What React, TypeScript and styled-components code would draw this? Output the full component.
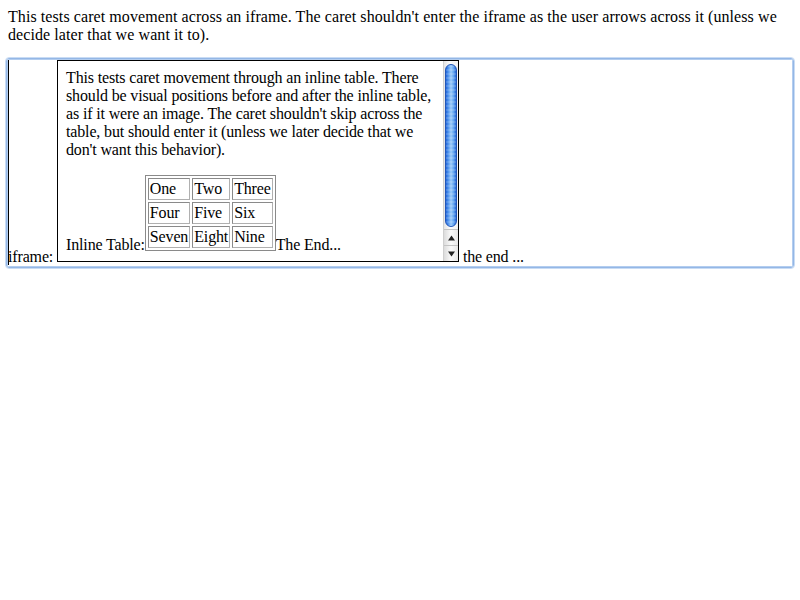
import React from 'react'
import styled, { createGlobalStyle } from 'styled-components'

const GlobalStyle = createGlobalStyle`
  body {
    margin: 0;
    font-family: "Liberation Serif", "Times New Roman", serif;
    font-size: 16px;
    line-height: 18px;
    color: #000;
    background: #fff;
  }
`

const Page = styled.div`
  padding: 8px;
`

const Intro = styled.div`
  margin-bottom: 13px;
  letter-spacing: 0.08px;
`

// focus ring drawn as nested borders around the editable area
const FocusRing = styled.div`
  margin: 0 -3px;
  border: 1px solid #c9dcf4;
  border-radius: 4px;
`

const RingMid = styled.div`
  border: 1px solid #94b7e6;
  border-radius: 3px;
`

const RingInner = styled.div`
  border: 1px solid #b3cdef;
  border-radius: 2px;
`

const Editable = styled.div`
  position: relative;
  background: #fff;
  letter-spacing: -0.15px;
`

const Caret = styled.span`
  position: absolute;
  left: 0;
  top: 0;
  bottom: 1px;
  width: 1px;
  background: #000;
`

const Frame = styled.span`
  display: inline-block;
  overflow: hidden;
  width: 400px;
  height: 200px;
  border: 1px solid #000;
  vertical-align: baseline;
  letter-spacing: -0.15px;
`

const FrameInner = styled.span`
  display: flex;
  height: 200px;
`

const FrameBody = styled.span`
  display: block;
  width: 385px;
  height: 200px;
  padding: 8px;
  box-sizing: border-box;
  overflow: hidden;
`

const Para = styled.span`
  display: block;
  margin-top: ${(p: { $gap?: number }) => p.$gap || 0}px;
`

const InlineTable = styled.table`
  display: inline-table;
  border-collapse: separate;
  border-spacing: 2px;
  border: 1px solid #8a8a8a;
  vertical-align: 52px;
  font-size: 16px;

  td {
    padding: 1px;
    border: 1px solid #8a8a8a;
    border-right-color: #b0b0b0;
    border-bottom-color: #b0b0b0;
    line-height: 18px;
  }
`

const Scrollbar = styled.span`
  display: flex;
  flex-direction: column;
  width: 15px;
  height: 200px;
  background: linear-gradient(to right, #e4e4e4, #fbfbfb 40%, #f1f1f1);
  border-left: 1px solid #cfcfcf;
  box-sizing: border-box;
`

const Track = styled.span`
  display: block;
  flex: 1;
  padding: 3px 1px 2px 1px;
`

const Thumb = styled.span`
  display: block;
  height: 100%;
  border-radius: 6px;
  border: 1px solid #1f55b8;
  box-sizing: border-box;
  background:
    repeating-linear-gradient(to bottom, rgba(255, 255, 255, 0.14) 0 2px, rgba(0, 0, 0, 0) 2px 4px),
    linear-gradient(to right, #2466d8, #4c92ee 22%, #9ccbfa 50%, #5fa2f0 78%, #2364d4);
`

const ArrowButton = styled.span`
  display: flex;
  align-items: center;
  justify-content: center;
  height: 16px;
  background: linear-gradient(to right, #dcdcdc, #fafafa 50%, #e6e6e6);
  border-top: 1px solid #c4c4c4;
  box-sizing: border-box;
`

const Arrow = ({ up }: { up?: boolean }) => (
  <svg width="7" height="6" viewBox="0 0 7 6">
    {up ? <path d="M3.5 0.5 L7 5.5 L0 5.5 Z" fill="#222" /> : <path d="M0 0.5 L7 0.5 L3.5 5.5 Z" fill="#222" />}
  </svg>
)

const App: React.FC = () => {
  return (
    <Page>
      <GlobalStyle />
      <Intro>
        This tests caret movement across an iframe. The caret shouldn't enter the iframe as the user arrows across it (unless we decide later that we want it to).
      </Intro>
      <FocusRing>
        <RingMid>
          <RingInner>
            <Editable>
              <Caret />
              iframe:{' '}
              <Frame>
                <FrameInner>
                  <FrameBody>
                    <Para>
                      This tests caret movement through an inline table. There should be visual positions before and after the inline table, as if it were an image. The caret shouldn't skip across the table, but should enter it (unless we later decide that we don't want this behavior).
                    </Para>
                    <Para $gap={16}>
                      Inline Table:
                      <InlineTable>
                        <tbody>
                          <tr><td>One</td><td>Two</td><td>Three</td></tr>
                          <tr><td>Four</td><td>Five</td><td>Six</td></tr>
                          <tr><td>Seven</td><td>Eight</td><td>Nine</td></tr>
                        </tbody>
                      </InlineTable>
                      The End...
                    </Para>
                  </FrameBody>
                  <Scrollbar>
                    <Track>
                      <Thumb />
                    </Track>
                    <ArrowButton><Arrow up /></ArrowButton>
                    <ArrowButton><Arrow /></ArrowButton>
                  </Scrollbar>
                </FrameInner>
              </Frame>
              {' '}the end ...
            </Editable>
          </RingInner>
        </RingMid>
      </FocusRing>
    </Page>
  )
}

export default App
